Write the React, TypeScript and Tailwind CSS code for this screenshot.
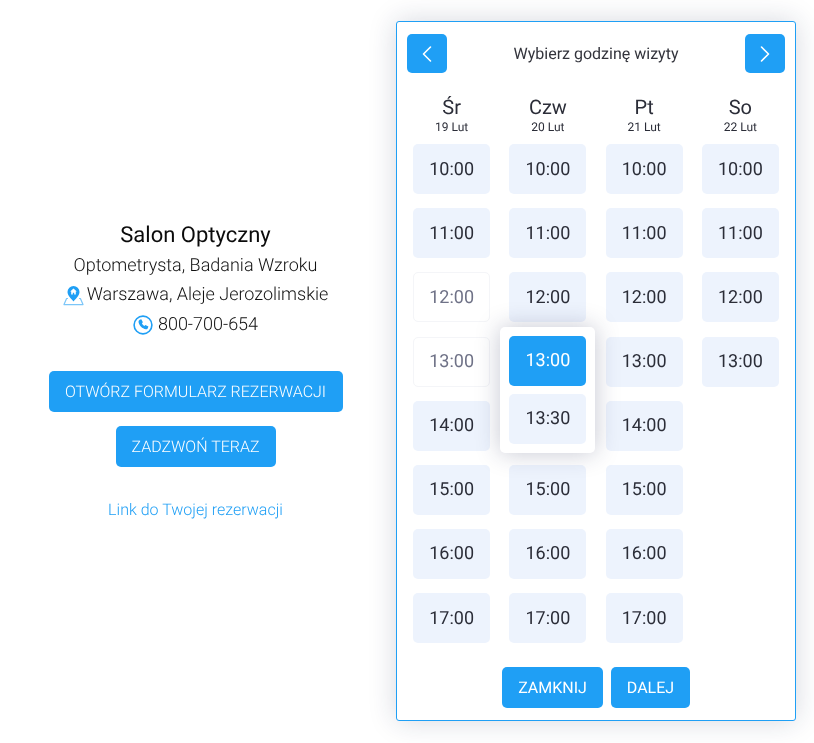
const font = { fontFamily: 'Roboto, sans-serif' };

const hours = ['10:00', '11:00', '12:00', '13:00', '14:00', '15:00', '16:00', '17:00'];

type Col = { day: string; date: string; slots: string[]; faded?: string[] };
const cols: Col[] = [
  { day: 'Śr', date: '19 Lut', slots: hours, faded: ['12:00', '13:00'] },
  { day: 'Czw', date: '20 Lut', slots: hours },
  { day: 'Pt', date: '21 Lut', slots: hours },
  { day: 'So', date: '22 Lut', slots: hours.slice(0, 4) },
];

function Slot({ t, faded, active }: { t: string; faded?: boolean; active?: boolean }) {
  const tone = active
    ? 'bg-[#1f9ff5] text-white'
    : faded
      ? 'bg-white border border-[#f4f5f8] text-[#6f7287]'
      : 'bg-[#edf3fd] text-[#2b2d38]';
  return (
    <div className={`w-[77px] h-[50px] rounded-[5px] flex items-center justify-center text-[18px] ${tone}`}>{t}</div>
  );
}

function PinIcon() {
  return (
    <svg width="21" height="21" viewBox="0 0 21 21" className="mr-[3px] shrink-0">
      <path d="M5 13.5H3.6L1 19.6H20L17.4 13.5H16" fill="none" stroke="#7cc6f8" strokeWidth="1.2" strokeLinejoin="round" />
      <path d="M10.5 1a6 6 0 0 0-6 6c0 3.6 4.2 7.4 6 9.4 1.8-2 6-5.8 6-9.4a6 6 0 0 0-6-6z" fill="#1f9ff5" />
      <path d="M10.5 3.6L7.2 6.5h1v2.9h1.6V7.7h1.4v1.7h1.6V6.5h1z" fill="#fff" />
    </svg>
  );
}

function PhoneIcon() {
  return (
    <svg width="20" height="20" viewBox="0 0 20 20" className="mr-[5px] shrink-0">
      <circle cx="10" cy="10" r="8.9" fill="none" stroke="#1f9ff5" strokeWidth="1.6" />
      <path d="M6.7 4.7l1.6-.5 1.6 3-1 1.1c.4 1.1 1.2 2 2.4 2.6l1.1-1 3 1.6-.5 1.6c-.3.8-1.1 1.3-2 1.2-3.6-.5-6.8-3.6-7.4-7.2-.1-.9.3-1.7 1.2-2.4z" fill="#1f9ff5" />
    </svg>
  );
}

function Chevron({ dir }: { dir: 'left' | 'right' }) {
  return (
    <svg width="12" height="18" viewBox="0 0 12 18" fill="none" stroke="#fff" strokeWidth="1.6" strokeLinecap="round" strokeLinejoin="round">
      <path d={dir === 'left' ? 'M9.5 2L2.5 9l7 7' : 'M2.5 2l7 7-7 7'} />
    </svg>
  );
}

export default function App() {
  return (
    <div style={font} className="w-[814px] h-[743px] flex overflow-hidden antialiased [will-change:transform] [text-rendering:geometricPrecision]">
      <div className="w-[391px] shrink-0 pt-[220px] flex flex-col items-center">
        <div className="text-[22px] leading-[31px] text-[#0b0b0b]">Salon Optyczny</div>
        <div className="text-[18px] leading-[29px] font-light text-[#111]">Optometrysta, Badania Wzroku</div>
        <div className="text-[18px] leading-[30px] font-light text-[#111] flex items-center">
          <PinIcon />
          Warszawa, Aleje Jerozolimskie
        </div>
        <div className="text-[18px] leading-[30px] font-light text-[#111] flex items-center">
          <PhoneIcon />
          800-700-654
        </div>
        <div className="mt-[31px] h-[41px] w-[294px] rounded-[5px] bg-[#1f9ff5] text-white text-[16px] font-light flex items-center justify-center">
          OTWÓRZ FORMULARZ REZERWACJI
        </div>
        <div className="mt-[14px] h-[41px] w-[160px] rounded-[5px] bg-[#1f9ff5] text-white text-[16px] font-light flex items-center justify-center">
          ZADZWOŃ TERAZ
        </div>
        <div className="mt-[31px] text-[16px] font-light leading-[24px] text-[#1f9ff5]">Link do Twojej rezerwacji</div>
      </div>

      <div className="mt-[21px] ml-[5px] w-[400px] h-[700px] shrink-0 bg-white border border-[#1f9ff5] rounded-[3px] shadow-[0_0_28px_rgba(30,40,80,0.18)] px-[6.5px] flex flex-col">
        <div className="flex items-center justify-between h-[39px] mt-[12px] px-[3.5px]">
          <div className="w-[40px] h-[39px] rounded-[5px] bg-[#1f9ff5] flex items-center justify-center">
            <Chevron dir="left" />
          </div>
          <div className="text-[16px] text-[#33343c] pt-[1px]">Wybierz godzinę wizyty</div>
          <div className="w-[40px] h-[39px] rounded-[5px] bg-[#1f9ff5] flex items-center justify-center">
            <Chevron dir="right" />
          </div>
        </div>

        <div className="grid grid-cols-4 mt-[22px]">
          {cols.map((c) => (
            <div key={c.day} className="flex flex-col items-center">
              <div className="text-[20px] leading-[24px] text-[#2b2d38]">{c.day}</div>
              <div className="text-[12px] leading-[16px] text-[#2b2d38] mb-[9.2px]">{c.date}</div>
              <div className="flex flex-col gap-[14.14px]">
                {c.slots.map((t) => {
                  if (c.day === 'Czw' && t === '14:00') {
                    return <div key={t} className="w-[77px] h-[50px]" />;
                  }
                  if (c.day === 'Czw' && t === '13:00') {
                    return (
                      <div key={t} className="relative w-[77px] h-[50px]">
                        <div className="absolute z-10 -left-[9px] -top-[10px] w-[95px] h-[126px] bg-white rounded-[5px] shadow-[0_0_24px_rgba(30,40,80,0.26)] flex flex-col items-center pt-[9px] gap-[8px]">
                          <Slot t="13:00" active />
                          <Slot t="13:30" />
                        </div>
                      </div>
                    );
                  }
                  return <Slot key={t} t={t} faded={c.faded?.includes(t)} />;
                })}
              </div>
            </div>
          ))}
        </div>

        <div className="mt-auto mb-[12px] flex justify-center gap-[8px]">
          <div className="h-[41px] w-[101px] rounded-[5px] bg-[#1f9ff5] text-white text-[16px] flex items-center justify-center">ZAMKNIJ</div>
          <div className="h-[41px] w-[79px] rounded-[5px] bg-[#1f9ff5] text-white text-[16px] flex items-center justify-center">DALEJ</div>
        </div>
      </div>
    </div>
  );
}
